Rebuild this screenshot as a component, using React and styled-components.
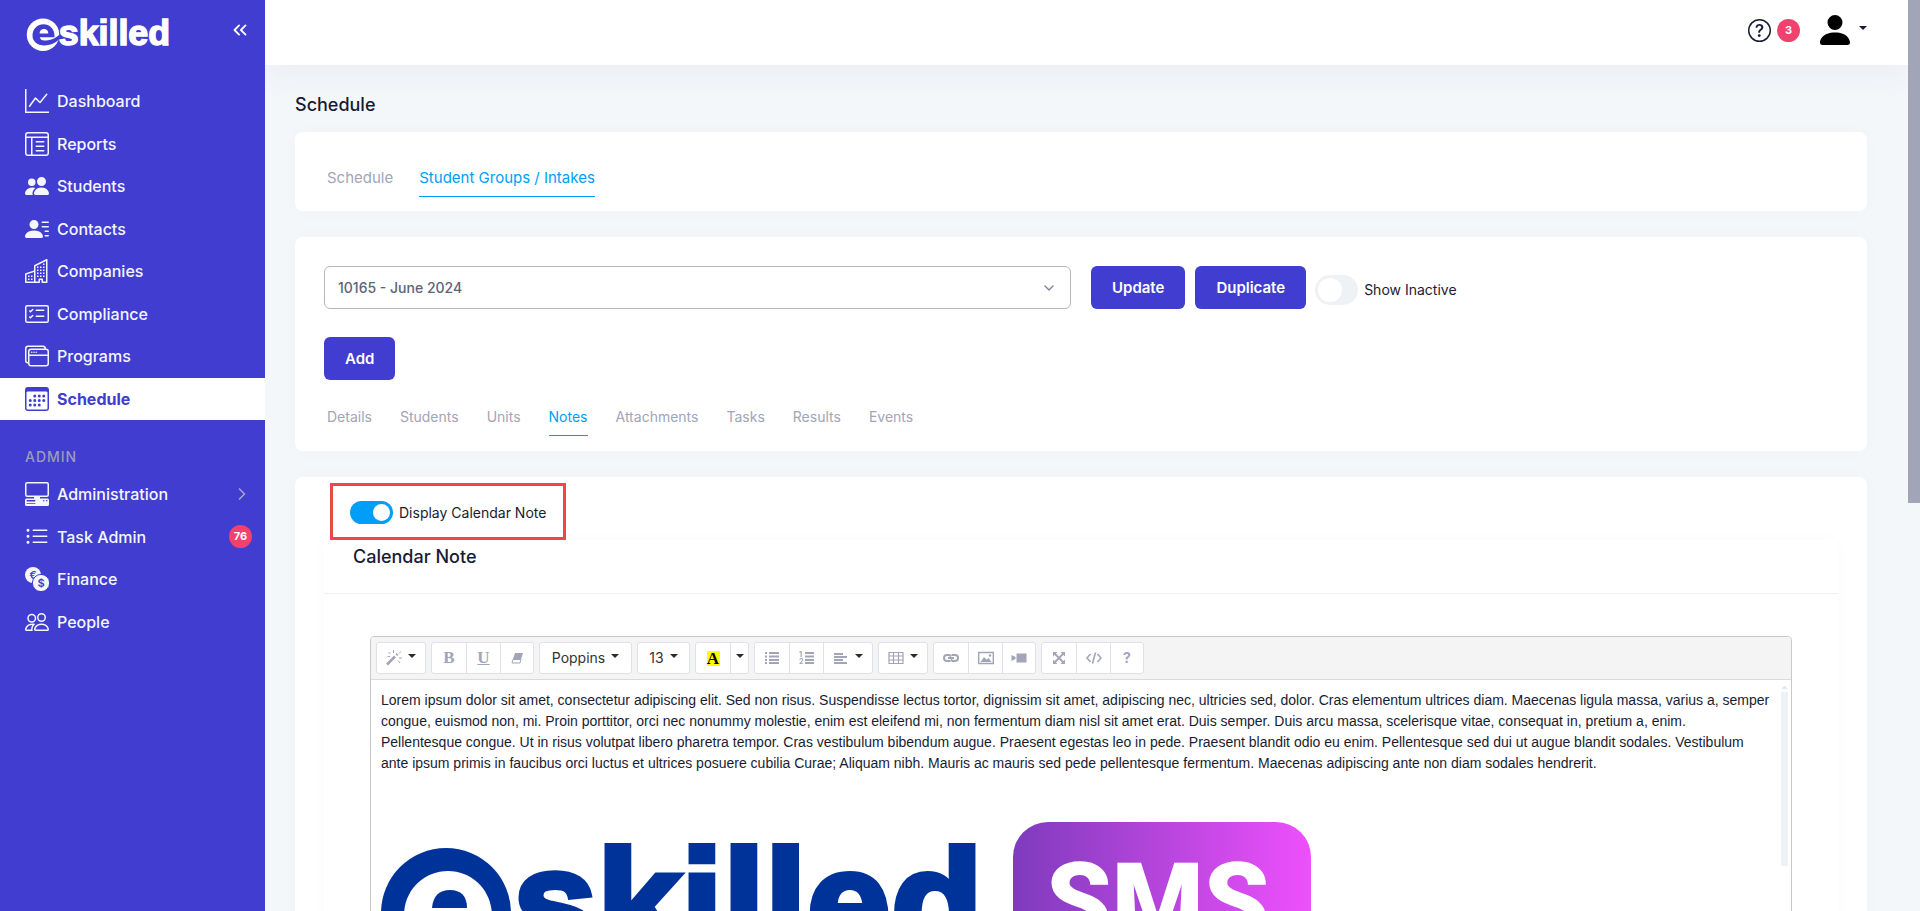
import React, { useState } from "react";
import styled, { createGlobalStyle, css } from "styled-components";
import {
  BsGraphUp,
  BsLayoutTextWindowReverse,
  BsPeopleFill,
  BsPersonLinesFill,
  BsBuildings,
  BsCardChecklist,
  BsWindowStack,
  BsCalendar3,
  BsPcDisplayHorizontal,
  BsListUl,
  BsPeople,
  BsPersonFill,
  BsQuestionCircle,
} from "react-icons/bs";
import { ChevronsLeft, ChevronRight, ChevronDown } from "lucide-react";

const color = {
  brand: "#403dd0",
  blue: "#009ef7",
  danger: "#f1416c",
  ink: "#181c32",
  muted: "#a1a5b7",
  page: "#f3f7fa",
  track: "#eff2f5",
};

const GlobalStyle = createGlobalStyle`
  *, *::before, *::after { box-sizing: border-box; }
  body {
    margin: 0;
    background: ${color.page};
    color: ${color.ink};
    font-family: Inter, "Noto Sans", sans-serif;
    font-size: 14px;
    line-height: 20px;
  }
  button, select, input { font: inherit; color: inherit; }
  h1, h2, p, ul { margin: 0; padding: 0; }
`;

const Shell = styled.div`
  display: grid;
  grid-template-columns: 265px minmax(0, 1fr) 12px;
  height: 100vh;
  overflow: hidden;
`;

/* ---------- sidebar ---------- */

const Sidebar = styled.aside`
  background: ${color.brand};
  color: #f4f6fc;
`;

const Brand = styled.div`
  display: flex;
  justify-content: space-between;
  align-items: flex-start;
  height: 80px;
  padding: 12px 14px 0 26px;
`;

const CollapseButton = styled.button`
  display: flex;
  padding: 7px 0 0;
  border: 0;
  background: none;
  color: #fff;
`;

const NavList = styled.ul`
  display: grid;
  grid-template-rows: repeat(${(p) => p.$rows}, 1fr);
  height: ${(p) => p.$height}px;
  list-style: none;
`;

const NavLink = styled.a`
  display: flex;
  align-items: center;
  gap: 8px;
  height: 100%;
  padding: 0 13px 0 25px;
  color: inherit;
  font-size: 16px;
  font-weight: 500;
  text-decoration: none;

  svg { flex: none; }
  span:first-of-type { flex: 1; }

  ${(p) =>
    p.$active &&
    css`
      background: #fff;
      color: ${color.brand};
      font-weight: 700;
    `}
`;

const NavHeading = styled.h2`
  padding: 27px 0 6px 25px;
  color: #9c9cb8;
  font-size: 14px;
  font-weight: 500;
  line-height: 20px;
  letter-spacing: 1px;
`;

const Badge = styled.span`
  display: inline-flex;
  align-items: center;
  justify-content: center;
  width: 23px;
  height: 23px;
  border-radius: 50%;
  background: ${color.danger};
  color: #fff;
  font-size: 11px;
  font-weight: 700;
  line-height: 1;
`;

/* ---------- main column ---------- */

const Main = styled.div`
  display: flex;
  flex-direction: column;
  min-width: 0;
  height: 100vh;
  overflow: hidden;
`;

const Topbar = styled.header`
  flex: none;
  display: flex;
  justify-content: flex-end;
  align-items: flex-start;
  height: 65px;
  padding: 15px 41px 0 0;
  background: #fff;
  box-shadow: 0 10px 30px rgba(82, 63, 105, 0.05);
`;

const HelpButton = styled.button`
  display: flex;
  align-items: center;
  gap: 6px;
  margin-top: 4px;
  padding: 0;
  border: 0;
  background: none;
`;

const AccountButton = styled.button`
  display: flex;
  align-items: flex-start;
  gap: 9px;
  margin-left: 20px;
  padding: 0;
  border: 0;
  background: none;
  color: #000;
`;

const Caret = styled.span`
  width: 0;
  border: 4px solid transparent;
  border-top-color: ${(p) => p.$tone || "#2b2b2b"};
  border-bottom: 0;
`;

const AccountCaret = styled(Caret)`
  margin-top: 11px;
`;

const Content = styled.main`
  flex: none;
  display: flex;
  flex-direction: column;
  padding: 28px 41px 0 30px;
`;

const PageTitle = styled.h1`
  margin-bottom: 15px;
  font-size: 18px;
  font-weight: 500;
  line-height: 24px;
`;

const Card = styled.section`
  margin-bottom: 26px;
  padding: ${(p) => p.$pad};
  border-radius: 8px;
  background: #fff;
  box-shadow: 0 0 20px rgba(76, 87, 125, 0.02);
`;

const Tab = styled.a`
  padding: 8px 0;
  border-bottom: 1px solid ${(p) => (p.$active ? color.blue : "transparent")};
  color: ${(p) => (p.$active ? color.blue : color.muted)};
  line-height: 20px;
  text-decoration: none;
`;

const Tabs = styled.nav`
  display: flex;
  gap: ${(p) => (p.$small ? 28 : 26)}px;
  padding-left: 3px;
  font-size: ${(p) => (p.$small ? 14 : 15)}px;
`;

const GroupRow = styled.div`
  display: flex;
  margin-bottom: ${(p) => (p.$last ? 19 : 28)}px;
`;

const SelectBox = styled.div`
  display: grid;
  align-items: center;
  width: calc(50% - 10px);
  margin-right: 20px;

  > * { grid-area: 1 / 1; }
  svg { justify-self: end; margin-right: 14px; color: #7e8299; pointer-events: none; }
`;

const Select = styled.select`
  width: 100%;
  height: 43px;
  padding: 0 13px;
  border: 1px solid #b5b5c3;
  border-radius: 6px;
  background: #fff;
  color: #5e6278;
  font-size: 14px;
  font-weight: 500;
  appearance: none;
`;

const Button = styled.button`
  height: 43px;
  padding: 0 21px;
  border: 0;
  border-radius: 6px;
  background: ${color.brand};
  color: #fff;
  font-size: 15px;
  font-weight: 600;

  & + & { margin-left: 10px; }
`;

const SwitchLabel = styled.label`
  display: flex;
  align-items: center;
  gap: 6px;
  font-size: 14px;
`;

const Switch = styled.input`
  appearance: none;
  display: flex;
  width: 43px;
  height: ${(p) => (p.$tall ? 30 : 23)}px;
  margin: 0;
  padding: 3px;
  border-radius: 15px;
  background: ${color.track};

  &::before {
    content: "";
    height: 100%;
    aspect-ratio: 1;
    border-radius: 50%;
    background: #fff;
  }

  &:checked {
    justify-content: flex-end;
    background: ${color.blue};
  }
`;

const InactiveSwitch = styled(SwitchLabel)`
  margin: 4px 0 0 9px;
`;

/* ---------- note card ---------- */

const Highlight = styled.div`
  width: fit-content;
  margin-left: 6px;
  padding: 15px 17px 13px;
  border: 3px solid #ea4a44;
`;

const NotePanel = styled.div`
  border-radius: 8px;
  box-shadow: 0 0 20px rgba(76, 87, 125, 0.02);
`;

const NoteTitle = styled.h2`
  padding: 5px 29px 24px;
  border-bottom: 1px solid ${color.track};
  font-size: 18px;
  font-weight: 500;
  line-height: 24px;
`;

const Editor = styled.div`
  margin: 42px 46px 0;
  border: 1px solid #c9c9c9;
  border-radius: 4px 4px 0 0;
  background: #fff;
`;

const Toolbar = styled.div`
  display: flex;
  flex-wrap: wrap;
  gap: 5px;
  padding: 5px;
  border-bottom: 1px solid #dadada;
  border-radius: 3px 3px 0 0;
  background: #f4f4f4;
`;

const ToolGroup = styled.div`
  display: flex;
  border: 1px solid #dfe1ea;
  border-radius: 3px;
  background: #fff;
`;

const Tool = styled.button`
  display: flex;
  align-items: center;
  justify-content: center;
  gap: 6px;
  width: ${(p) => p.$width || 34}px;
  height: 30px;
  padding: 0;
  border: 0;
  background: none;
  color: ${(p) => (p.$dark ? "#333" : color.muted)};
  font-size: 14px;

  & + & { border-left: 1px solid #dfe1ea; }
  ${Caret} { margin-bottom: 4px; }
`;

const Serif = styled.span`
  font-family: "Liberation Serif", serif;
  font-size: 17px;
  font-weight: 700;
  text-decoration: ${(p) => (p.$underline ? "underline" : "none")};
`;

const Marker = styled(Serif)`
  width: 13px;
  line-height: 15px;
  background: #ff0;
  color: #000;
`;

const EditorBody = styled.div`
  display: grid;
  grid-template-columns: minmax(0, 1fr) 7px;
  gap: 11px;
  height: 360px;
  padding: 6px 3px 0 10px;
`;

const EditorText = styled.div`
  padding-top: 4px;
  font-family: "Liberation Sans", Arial, sans-serif;
  font-size: 14px;
  line-height: 21px;
  outline: 0;

  svg { display: block; margin-top: 48px; }
`;

const EditorScroll = styled.div`
  display: flex;
  flex-direction: column;
  gap: 3px;

  &::before {
    content: "";
    border: 3px solid transparent;
    border-top: 0;
    border-bottom-color: #e4e6ef;
  }
  &::after {
    content: "";
    height: 174px;
    background: ${color.track};
  }
`;

const PageScroll = styled.div`
  background: ${color.page};

  &::before {
    content: "";
    display: block;
    height: 503px;
    background: ${color.muted};
  }
`;

/* ---------- drawings ---------- */

/* Disc with a cut-out "e"; the lower arm of the letter runs out to the right. */
function LogoMark({ fill, cut }) {
  return (
    <g>
      <circle cx="65" cy="65" r="65" fill={fill} />
      <path
        d="M23 68C23 42 43 23 67 23C91 23 111 42 111 68V75H52C54 83 60 88 70 88C92 88 112 82 132 64V82C112 100 92 108 70 108C43 108 23 92 23 68Z"
        fill={cut}
      />
      <path d="M51 60C52 48 58 42 69 42C80 42 86 48 86 60Z" fill={fill} />
    </g>
  );
}

const wordmark = {
  fontFamily: "Liberation Sans",
  fontWeight: "700",
  strokeWidth: "6",
};

function SmallLogo() {
  return (
    <svg width="146" height="40" viewBox="0 0 584 160" overflow="visible" role="img" aria-label="eskilled">
      <g transform="translate(3 26)">
        <LogoMark fill="#fff" cut={color.brand} />
      </g>
      <text x="131" y="130" fontSize="143" fill="#fff" stroke="#fff" {...wordmark}>
        skilled
      </text>
    </svg>
  );
}

function NoteLogo() {
  return (
    <svg width="932" height="170" viewBox="0 0 932 170" role="img" aria-label="eskilled SMS">
      <defs>
        <linearGradient id="smsFill">
          <stop offset="0" stopColor="#7e3bbd" />
          <stop offset="1" stopColor="#ee50fc" />
        </linearGradient>
      </defs>
      <g transform="translate(0 26)">
        <LogoMark fill="#003399" cut="#fff" />
      </g>
      <text x="132" y="133" fontSize="151" fill="#003399" stroke="#003399" {...wordmark}>
        skilled
      </text>
      <rect x="632" width="298" height="190" rx="35" fill="url(#smsFill)" />
      <text x="665" y="116" fontFamily="Roboto" fontWeight="900" fontSize="105" fill="#fff">
        SMS
      </text>
    </svg>
  );
}

function CoinsIcon({ size }) {
  return (
    <svg width={size} height={size} viewBox="0 0 24 24" fontFamily="Inter" fontWeight="600" textAnchor="middle">
      <circle cx="8" cy="8" r="8" fill="currentColor" />
      <text x="8" y="12" fontSize="11" fill={color.brand}>€</text>
      <circle cx="16" cy="16" r="8.6" fill="currentColor" stroke={color.brand} />
      <text x="16" y="20" fontSize="11" fill={color.brand}>$</text>
    </svg>
  );
}

const glyphs = {
  magic: (
    <g stroke="currentColor" fill="none">
      <path d="M1 14.500L9 6.500" strokeWidth="2.600" />
      <path d="M10.300 5.200L11.500 4" strokeWidth="2.600" />
      <path d="M7.500 0V3M2.500 2L4.500 4M1.500 6.500H4M13 8H16M12 10.500L14 13M13 3.500L15 1.500" strokeWidth="1" />
    </g>
  ),
  eraser: (
    <g>
      <path d="M6 3H14L12 9H4Z" fill="currentColor" />
      <path d="M4 9.500H12L11 13H3Z" fill="none" stroke="currentColor" />
    </g>
  ),
  ul: <path d="M1 2h2v2H1zM1 5.500h2v2H1zM1 9h2v2H1zM1 12h2v2H1zM5 2h10v2H5zM5 5.500h10v2H5zM5 9h10v2H5zM5 12h10v2H5z" fill="currentColor" />,
  ol: (
    <g fill="currentColor">
      <path d="M6 2h9v2H6zM6 5.500h9v2H6zM6 9h9v2H6zM6 12h9v2H6z" />
      <text x="0" y="7" fontSize="7" fontWeight="700">1</text>
      <text x="0" y="14" fontSize="7" fontWeight="700">2</text>
    </g>
  ),
  align: <path d="M1 3h9v2H1zM1 6h13v2H1zM1 9h9v2H1zM1 12h13v2H1z" fill="currentColor" />,
  table: <path d="M1 2.500h14v11H1zM1 6h14M1 10h14M5.500 2.500v11M10.500 2.500v11" fill="none" stroke="currentColor" strokeWidth="1.200" />,
  link: (
    <g fill="none" stroke="currentColor" strokeWidth="2">
      <path d="M7.500 11H4a3 3 0 0 1 0-6H6.500L8 6.500" />
      <path d="M8.500 5H12a3 3 0 0 1 0 6H9.500L8 9.500" />
      <path d="M5 8H11" />
    </g>
  ),
  picture: (
    <g>
      <path d="M.700 2.500h14.600v11H.700z" fill="none" stroke="currentColor" strokeWidth="1.400" />
      <path d="M2.500 12L6 7L8.500 9.500L10.500 8L13.500 12Z" fill="currentColor" />
      <circle cx="12" cy="5.500" r="1.200" fill="currentColor" />
    </g>
  ),
  video: <path d="M5.500 3.500h10v9h-10zM.500 5L4.500 7V9L.500 11z" fill="currentColor" />,
  expand: (
    <g>
      <path d="M3 3L13 13M13 3L3 13" stroke="currentColor" strokeWidth="1.800" />
      <path d="M2 2H6.500L2 6.500zM14 2V6.500L9.500 2zM2 14V9.500L6.500 14zM14 14H9.500L14 9.500z" fill="currentColor" />
    </g>
  ),
  code: <path d="M4.500 4L1 8L4.500 12M11.500 4L15 8L11.500 12M9.500 2.500L6.500 13.500" fill="none" stroke="currentColor" strokeWidth="1.600" />,
};

function Glyph({ name }) {
  return (
    <svg width="16" height="16" viewBox="0 0 16 16" aria-hidden="true">
      {glyphs[name]}
    </svg>
  );
}

/* ---------- data ---------- */

const mainNav = [
  ["Dashboard", BsGraphUp],
  ["Reports", BsLayoutTextWindowReverse],
  ["Students", BsPeopleFill],
  ["Contacts", BsPersonLinesFill],
  ["Companies", BsBuildings],
  ["Compliance", BsCardChecklist],
  ["Programs", BsWindowStack],
  ["Schedule", BsCalendar3],
];

const adminNav = [
  ["Administration", BsPcDisplayHorizontal, <ChevronRight key="more" size={20} strokeWidth={2} color="#a3a3c4" />],
  ["Task Admin", BsListUl, <Badge key="count">76</Badge>],
  ["Finance", CoinsIcon],
  ["People", BsPeople],
];

const groupTabs = ["Details", "Students", "Units", "Notes", "Attachments", "Tasks", "Results", "Events"];

function NavItem({ label, Icon, active, children }) {
  return (
    <li>
      <NavLink href="#" $active={active} aria-current={active ? "page" : undefined}>
        <Icon size={24} />
        <span>{label}</span>
        {children}
      </NavLink>
    </li>
  );
}

export default function App() {
  const [inactive, setInactive] = useState(false);
  const [display, setDisplay] = useState(true);

  return (
    <>
      <GlobalStyle />
      <Shell>
        <Sidebar>
          <Brand>
            <SmallLogo />
            <CollapseButton aria-label="Collapse menu">
              <ChevronsLeft size={22} />
            </CollapseButton>
          </Brand>
          <NavList $rows={8} $height={340}>
            {mainNav.map(([label, Icon]) => (
              <NavItem key={label} label={label} Icon={Icon} active={label === "Schedule"} />
            ))}
          </NavList>
          <NavHeading>ADMIN</NavHeading>
          <NavList $rows={4} $height={170}>
            {adminNav.map(([label, Icon, extra]) => (
              <NavItem key={label} label={label} Icon={Icon}>
                {extra}
              </NavItem>
            ))}
          </NavList>
        </Sidebar>

        <Main>
          <Topbar>
            <HelpButton aria-label="Help, 3 new">
              <BsQuestionCircle size={23} />
              <Badge>3</Badge>
            </HelpButton>
            <AccountButton aria-label="Account">
              <BsPersonFill size={30} viewBox="2 2 12 12" />
              <AccountCaret $tone={color.ink} />
            </AccountButton>
          </Topbar>

          <Content>
            <PageTitle>Schedule</PageTitle>

            <Card $pad="28px 29px 14px">
              <Tabs>
                <Tab href="#">Schedule</Tab>
                <Tab href="#" $active>Student Groups / Intakes</Tab>
              </Tabs>
            </Card>

            <Card $pad="29px 29px 15px">
              <GroupRow>
                <SelectBox>
                  <Select aria-label="Student group" defaultValue="10165">
                    <option value="10165">10165 - June 2024</option>
                  </Select>
                  <ChevronDown size={16} />
                </SelectBox>
                <Button>Update</Button>
                <Button>Duplicate</Button>
                <InactiveSwitch>
                  <Switch
                    type="checkbox"
                    $tall
                    checked={inactive}
                    onChange={(e) => setInactive(e.target.checked)}
                  />
                  Show Inactive
                </InactiveSwitch>
              </GroupRow>
              <GroupRow $last>
                <Button>Add</Button>
              </GroupRow>
              <Tabs $small>
                {groupTabs.map((t) => (
                  <Tab key={t} href="#" $active={t === "Notes"}>{t}</Tab>
                ))}
              </Tabs>
            </Card>

            <Card $pad="6px 29px 0">
              <Highlight>
                <SwitchLabel>
                  <Switch
                    type="checkbox"
                    checked={display}
                    onChange={(e) => setDisplay(e.target.checked)}
                  />
                  Display Calendar Note
                </SwitchLabel>
              </Highlight>
              <NotePanel>
                <NoteTitle>Calendar Note</NoteTitle>
                <Editor>
                  <Toolbar>
                    <ToolGroup>
                      <Tool $width={48} aria-label="Style"><Glyph name="magic" /><Caret /></Tool>
                    </ToolGroup>
                    <ToolGroup>
                      <Tool aria-label="Bold"><Serif>B</Serif></Tool>
                      <Tool aria-label="Underline"><Serif $underline>U</Serif></Tool>
                      <Tool $width={33} aria-label="Clear formatting"><Glyph name="eraser" /></Tool>
                    </ToolGroup>
                    <ToolGroup>
                      <Tool $width={91} $dark>Poppins<Caret /></Tool>
                    </ToolGroup>
                    <ToolGroup>
                      <Tool $width={51} $dark>13<Caret /></Tool>
                    </ToolGroup>
                    <ToolGroup>
                      <Tool aria-label="Text highlight"><Marker>A</Marker></Tool>
                      <Tool $width={18} aria-label="More colours"><Caret /></Tool>
                    </ToolGroup>
                    <ToolGroup>
                      <Tool aria-label="Bulleted list"><Glyph name="ul" /></Tool>
                      <Tool aria-label="Numbered list"><Glyph name="ol" /></Tool>
                      <Tool $width={49} aria-label="Paragraph"><Glyph name="align" /><Caret /></Tool>
                    </ToolGroup>
                    <ToolGroup>
                      <Tool $width={48} aria-label="Table"><Glyph name="table" /><Caret /></Tool>
                    </ToolGroup>
                    <ToolGroup>
                      <Tool aria-label="Link"><Glyph name="link" /></Tool>
                      <Tool aria-label="Picture"><Glyph name="picture" /></Tool>
                      <Tool $width={33} aria-label="Video"><Glyph name="video" /></Tool>
                    </ToolGroup>
                    <ToolGroup>
                      <Tool aria-label="Full screen"><Glyph name="expand" /></Tool>
                      <Tool aria-label="Code view"><Glyph name="code" /></Tool>
                      <Tool $width={33} aria-label="Help"><b>?</b></Tool>
                    </ToolGroup>
                  </Toolbar>
                  <EditorBody>
                    <EditorText
                      role="textbox"
                      aria-label="Calendar note"
                      contentEditable
                      suppressContentEditableWarning
                      spellCheck={false}
                    >
                      <p>
                        Lorem ipsum dolor sit amet, consectetur adipiscing elit. Sed non risus. Suspendisse lectus
                        tortor, dignissim sit amet, adipiscing nec, ultricies sed, dolor. Cras elementum ultrices
                        diam. Maecenas ligula massa, varius a, semper congue, euismod non, mi. Proin porttitor, orci
                        nec nonummy molestie, enim est eleifend mi, non fermentum diam nisl sit amet erat. Duis
                        semper. Duis arcu massa, scelerisque vitae, consequat in, pretium a, enim. Pellentesque
                        congue. Ut in risus volutpat libero pharetra tempor. Cras vestibulum bibendum augue. Praesent
                        egestas leo in pede. Praesent blandit odio eu enim. Pellentesque sed dui ut augue blandit
                        sodales. Vestibulum ante ipsum primis in faucibus orci luctus et ultrices posuere cubilia
                        Curae; Aliquam nibh. Mauris ac mauris sed pede pellentesque fermentum. Maecenas adipiscing
                        ante non diam sodales hendrerit.
                      </p>
                      <NoteLogo />
                    </EditorText>
                    <EditorScroll />
                  </EditorBody>
                </Editor>
              </NotePanel>
            </Card>
          </Content>
        </Main>
        <PageScroll />
      </Shell>
    </>
  );
}
